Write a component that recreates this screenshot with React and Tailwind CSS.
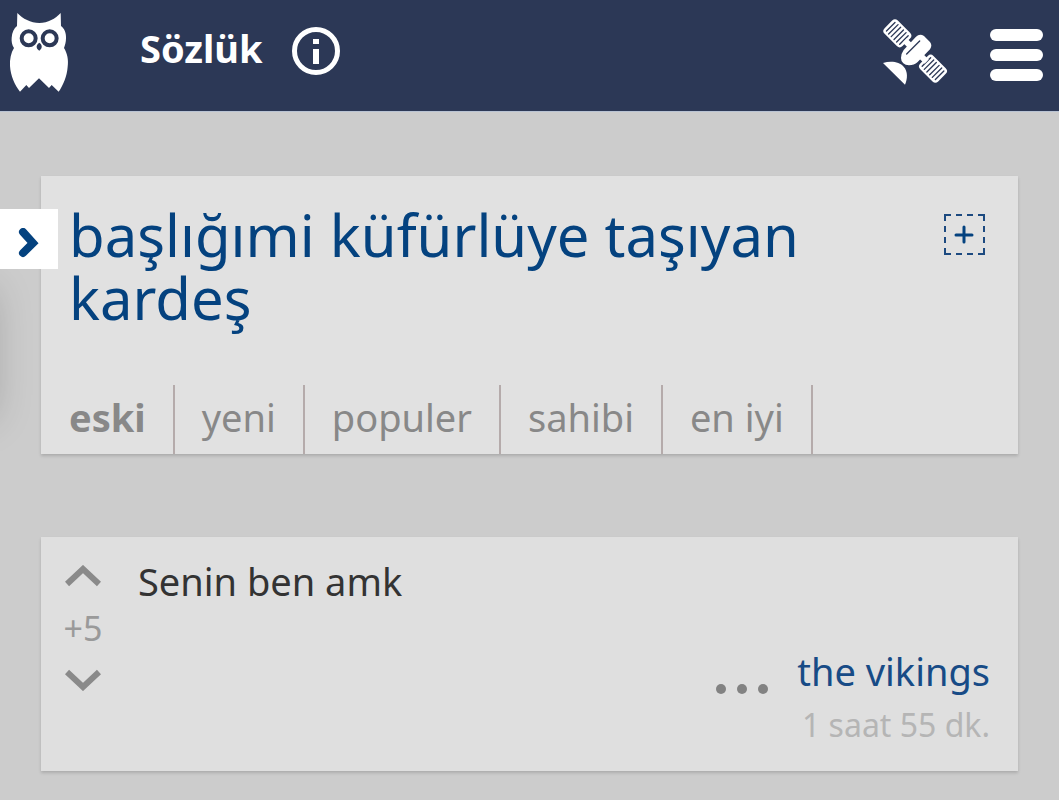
import { useState } from "react";

const TABS = ["eski", "yeni", "populer", "sahibi", "en iyi"];

function OwlLogo() {
  return (
    <svg viewBox="27 38 180 240" className="h-20 w-15" aria-hidden="true">
      <path
        fill="#fff"
        d="M52 41 C68 58 92 71 118 71 C144 71 166 58 182 41 L183 80 C193 87 199 101 198 117 C198 129 195 138 192 146 C202 162 206 182 203 202 C201 230 190 257 176 277 L155 257 L147 266 L117 237 L87 266 L79 257 L60 277 C44 257 32 230 30 200 C29 180 33 160 42 146 C36 137 34 126 35 115 C36 99 42 87 51 80 Z"
      />
      <g fill="none" stroke="#2c3856" strokeWidth="12">
        <circle cx="86" cy="117" r="21" />
        <circle cx="149" cy="117" r="21" />
      </g>
      <path fill="#2c3856" d="M118 130 C124 134 126 139 125 144 C124 149 121 152 118 154 C114 152 111 149 110 144 C109 139 112 134 118 130 Z" />
    </svg>
  );
}

function InfoIcon() {
  return (
    <svg viewBox="0 0 50 50" className="size-[50px]" aria-hidden="true">
      <circle cx="25" cy="24" r="21.500" fill="none" stroke="#fff" strokeWidth="5" />
      <rect x="22" y="12" width="6" height="5" fill="#fff" />
      <rect x="22" y="22" width="6" height="15" fill="#fff" />
    </svg>
  );
}

function SolarPanel() {
  return (
    <>
      <rect x="-38" y="-28" width="76" height="56" rx="12" fill="#fff" />
      <g stroke="#2c3856" strokeWidth="4" strokeLinecap="round">
        <path d="M-28 -18V18M-17 -20V20M-6 -20V20M6 -20V20M17 -20V20M28 -18V18" />
      </g>
    </>
  );
}

function SatelliteIcon() {
  return (
    <svg viewBox="66 54 198 201" className="h-[67px] w-[66px]" aria-hidden="true">
      <g transform="translate(112 100) rotate(45)">
        <SolarPanel />
      </g>
      <g transform="translate(219 206) rotate(45)">
        <SolarPanel />
      </g>
      <path stroke="#fff" strokeWidth="18" d="M134 121L200 185" />
      <path
        fill="#fff"
        d="M168 110 Q179 99 192 108 L210 126 Q218 136 210 148 L173 186 Q162 196 147 196 Q136 196 130 190 Q123 184 123 174 Q123 161 131 150 Z"
      />
      <path stroke="#2c3856" strokeWidth="4" strokeLinecap="round" d="M179 123L140 162" />
      <path fill="#fff" d="M69 189 C92 181 119 185 131 200 C144 214 143 236 135 254 Z" />
    </svg>
  );
}

function MenuIcon() {
  return (
    <svg viewBox="0 0 53 53" className="size-[53px]" fill="#fff" aria-hidden="true">
      <rect width="53" height="12" rx="6" />
      <rect y="20" width="53" height="12" rx="6" />
      <rect y="40" width="53" height="12" rx="6" />
    </svg>
  );
}

function Header() {
  return (
    <header className="flex h-28 items-center justify-between border-b border-[#b9c3d3] bg-[#2c3856] pr-4 pb-2 pl-[9px] text-white">
      <div className="flex items-center">
        <a href="#home" aria-label="Ana sayfa">
          <OwlLogo />
        </a>
        <a href="#sozluk" className="ml-[71px] pb-2 text-[38px] leading-12 font-bold">
          Sözlük
        </a>
        <button type="button" aria-label="Bilgi" className="ml-7">
          <InfoIcon />
        </button>
      </div>
      <div className="flex items-center gap-[42px]">
        <button type="button" aria-label="Uydu">
          <SatelliteIcon />
        </button>
        <button type="button" aria-label="Menü" className="pt-2">
          <MenuIcon />
        </button>
      </div>
    </header>
  );
}

function TopicCard() {
  const [active, setActive] = useState("eski");

  return (
    <section className="bg-[#e1e1e1] shadow-[0_2px_3px_rgba(0,0,0,0.16)]">
      <div className="flex items-start justify-between px-7 pt-[27px]">
        <h1 className="text-[58px] leading-[63px] text-[#04427f]">
          <a href="#baslik">başlığımi küfürlüye taşıyan kardeş</a>
        </h1>
        <button type="button" aria-label="Ekle" className="mt-[9px] mr-1 ml-20 shrink-0 text-[#1c4a80]">
          <svg viewBox="0 0 44 44" className="size-11" fill="none" stroke="currentColor" aria-hidden="true">
            <path
              strokeWidth="2"
              d="M3 9V3H9M14 3H20M25 3H31M36 3H42V9M42 14V20M42 25V31M42 36V42H36M31 42H25M20 42H14M9 42H3V36M3 31V25M3 20V14"
            />
            <path stroke="#04427f" strokeWidth="3" strokeLinecap="round" d="M22 15V30M14 23H30" />
          </svg>
        </button>
      </div>
      <nav className="mt-14 flex pl-px">
        {TABS.map((tab) => (
          <button
            key={tab}
            type="button"
            onClick={() => setActive(tab)}
            className={`border-r-2 border-[#b5abab] px-[27px] pt-1 pb-[9px] text-[38px] leading-14 text-[#888] ${
              active === tab ? "font-bold" : ""
            }`}
          >
            {tab}
          </button>
        ))}
      </nav>
    </section>
  );
}

function VoteArrow({ label, d }) {
  return (
    <button type="button" aria-label={label}>
      <svg viewBox="0 0 36 22" className="h-[22px] w-9" fill="none" stroke="#8a8a8a" strokeWidth="6" aria-hidden="true">
        <path d={d} />
      </svg>
    </button>
  );
}

function Entry() {
  return (
    <article className="flex bg-[#dfdfdf] px-7 pt-7 pb-5 shadow-[0_2px_3px_rgba(0,0,0,0.16)]">
      <div className="-ml-2 flex w-11 flex-col items-center">
        <VoteArrow label="Artı oy" d="M2 19L18 4L34 19" />
        <span className="my-[17px] text-[34px] leading-12 text-[#9a9a9a]">+5</span>
        <VoteArrow label="Eksi oy" d="M2 3L18 18L34 3" />
      </div>
      <div className="ml-[33px] flex-1">
        <p className="text-[38px] leading-8 text-[#333]">Senin ben amk</p>
        <footer className="mt-[46px] flex justify-end gap-7">
          <button type="button" aria-label="Seçenekler" className="self-start pt-10">
            <svg viewBox="0 0 54 12" className="h-3 w-[54px]" fill="#828282" aria-hidden="true">
              <circle cx="6" cy="6" r="5" />
              <circle cx="27" cy="6" r="5" />
              <circle cx="48" cy="6" r="5" />
            </svg>
          </button>
          <div className="text-right">
            <a href="#yazar" className="block text-[38px] leading-14 text-[#174b86]">
              the vikings
            </a>
            <time className="block text-[32px] leading-13 text-[#b5b5b5]">1 saat 55 dk.</time>
          </div>
        </footer>
      </div>
    </article>
  );
}

export default function App() {
  return (
    <div className="relative min-h-screen overflow-hidden bg-[#ccc] font-['Noto_Sans',sans-serif]">
      <Header />
      <main className="flex flex-col gap-[83px] px-[41px] py-16">
        <TopicCard />
        <Entry />
      </main>
      <div className="absolute top-[290px] -left-12 h-32 w-10 shadow-[0_0_40px_rgba(0,0,0,0.22)]" />
      <button
        type="button"
        aria-label="Başlıkları aç"
        className="absolute top-[209px] left-0 flex h-15 w-[58px] items-center justify-center bg-white pt-2"
      >
        <svg viewBox="0 0 22 30" className="h-[30px] w-[22px]" fill="none" stroke="#04427f" strokeWidth="8" strokeLinecap="round" aria-hidden="true">
          <path d="M5 4L15 15L5 25" />
        </svg>
      </button>
    </div>
  );
}
